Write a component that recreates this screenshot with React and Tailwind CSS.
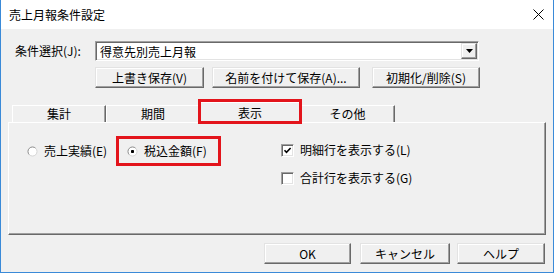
import React from "react";

function Btn({ className, children }) {
  return (
    <div
      className={
        "h-[21px] flex items-center justify-center bg-[#f0f0f0] border border-t-[#e3e3e3] border-l-[#e3e3e3] border-b-[#696969] border-r-[#696969] shadow-[inset_-1px_-1px_0_#a0a0a0,inset_1px_1px_0_#ffffff] text-[12px] text-black leading-none " +
        className
      }
    >
      {children}
    </div>
  );
}

function Radio({ checked }) {
  return (
    <svg width="11" height="11" viewBox="0 0 11 11" className="shrink-0">
      <circle cx="5.5" cy="5.5" r="4.5" fill="#ffffff" />
      <path d="M2.3 8.7 A4.5 4.5 0 0 1 8.7 2.3" fill="none" stroke="#8a8a8a" strokeWidth="1" />
      <path d="M8.7 2.3 A4.5 4.5 0 0 1 2.3 8.7" fill="none" stroke="#d4d4d4" strokeWidth="1" />
      {checked && <rect x="4" y="4" width="3" height="3" rx="0.8" fill="#000" />}
    </svg>
  );
}

function Check({ checked }) {
  return (
    <div className="w-[13px] h-[13px] shrink-0 bg-white border border-t-[#a0a0a0] border-l-[#a0a0a0] border-b-white border-r-white shadow-[inset_1px_1px_0_#696969,inset_-1px_-1px_0_#e3e3e3] flex items-center justify-center">
      {checked && (
        <svg width="9" height="9" viewBox="0 0 9 9">
          <path d="M1.5 4.2 L3.5 6.3 L7.6 2" fill="none" stroke="#000" strokeWidth="1.6" />
        </svg>
      )}
    </div>
  );
}

function Tab({ className, children }) {
  return (
    <div
      className={
        "h-[17px] flex items-center justify-center border-t border-l border-t-white border-l-white border-r border-r-[#696969] shadow-[inset_-1px_0_0_#a0a0a0] text-[12px] leading-none " +
        className
      }
    >
      {children}
    </div>
  );
}

export default function App() {
  return (
    <div className="w-[554px] h-[274px] bg-white font-['Noto_Sans_CJK_JP','Noto_Sans',sans-serif] text-black text-[12px]">
      <div className="w-full h-[273px] flex flex-col border-l border-r border-b border-[#3a8ad8]">
        {/* Title bar */}
        <div className="h-[29px] bg-white flex items-center justify-between pl-[8px] pr-[9px] shrink-0">
          <span className="text-[12px] leading-none">売上月報条件設定</span>
          <svg width="11" height="11" viewBox="0 0 11 11">
            <path d="M0.5 0.5 L10.5 10.5 M10.5 0.5 L0.5 10.5" stroke="#000" strokeWidth="1" />
          </svg>
        </div>

        {/* Body */}
        <div className="flex-1 bg-[#f0f0f0] flex flex-col">
          {/* Row 1 */}
          <div className="mt-[12px] h-[20px] flex items-center">
            <div className="w-[94px] pl-[14px] leading-none">条件選択(J):</div>
            <div className="w-[384px] h-[20px] bg-white border border-t-[#a0a0a0] border-l-[#a0a0a0] border-b-white border-r-white shadow-[inset_1px_1px_0_#696969,inset_-1px_-1px_0_#e3e3e3] flex items-center pl-[4px] pr-[1px] py-[1px]">
              <span className="flex-1 leading-none pt-[1px]">得意先別売上月報</span>
              <div className="w-[16px] h-[16px] bg-[#f0f0f0] border border-t-[#e3e3e3] border-l-[#e3e3e3] border-b-[#696969] border-r-[#696969] shadow-[inset_-1px_-1px_0_#a0a0a0,inset_1px_1px_0_#ffffff] flex items-center justify-center">
                <svg width="7" height="4" viewBox="0 0 7 4">
                  <path d="M0 0 L7 0 L3.5 4 Z" fill="#000" />
                </svg>
              </div>
            </div>
          </div>

          {/* Row 2 buttons */}
          <div className="mt-[6px] flex pl-[94px]">
            <Btn className="w-[109px]">上書き保存(V)</Btn>
            <Btn className="w-[148px] ml-[8px]">名前を付けて保存(A)...</Btn>
            <Btn className="w-[108px] ml-[12px]">初期化/削除(S)</Btn>
          </div>

          {/* Tabs */}
          <div className="mt-[13px] ml-[7px] h-[21px] flex items-end pl-[4px] relative">
            <Tab className="w-[94px]">集計</Tab>
            <Tab className="w-[94px]">期間</Tab>
            <div className="relative ml-[-2px] w-[104px] h-[21px] bg-[#f0f0f0] border-t border-l border-t-white border-l-white border-r border-r-[#696969] shadow-[inset_-1px_0_0_#a0a0a0] flex items-center justify-center leading-none z-10 mb-[-1px] pb-[1px]">
              表示
              <div className="absolute left-[-1px] top-[-4px] w-[104px] h-[25px] border-[3px] border-[#e3141b] pointer-events-none" />
            </div>
            <Tab className="w-[95px] ml-[-2px]">その他</Tab>
          </div>

          {/* Panel */}
          <div className="ml-[7px] w-[538px] h-[113px] relative border border-t-white border-l-white border-b-[#696969] border-r-[#696969] shadow-[inset_-1px_-1px_0_#a0a0a0]">
            <div className="flex pt-[20px]">
              <div className="w-[100px] ml-[18px] h-[16px] flex items-center gap-[6px]">
                <Radio />
                <span className="leading-none">売上実績(E)</span>
              </div>
              <div className="w-[154px] h-[16px] flex items-center gap-[6px]">
                <Radio checked />
                <span className="leading-none">税込金額(F)</span>
              </div>
              <div className="flex flex-col gap-[12px]">
                <div className="h-[16px] flex items-center gap-[6px] mt-[-1px]">
                  <Check checked />
                  <span className="leading-none">明細行を表示する(L)</span>
                </div>
                <div className="h-[16px] flex items-center gap-[6px]">
                  <Check />
                  <span className="leading-none">合計行を表示する(G)</span>
                </div>
              </div>
            </div>
            <div className="absolute left-[107px] top-[13px] w-[105px] h-[30px] border-[3px] border-[#e3141b] pointer-events-none" />
          </div>

          {/* Bottom buttons */}
          <div className="mt-[8px] flex pl-[263px]">
            <Btn className="w-[87px]">OK</Btn>
            <Btn className="w-[90px] ml-[9px]">キャンセル</Btn>
            <Btn className="w-[88px] ml-[7px]">ヘルプ</Btn>
          </div>
        </div>
      </div>
    </div>
  );
}
